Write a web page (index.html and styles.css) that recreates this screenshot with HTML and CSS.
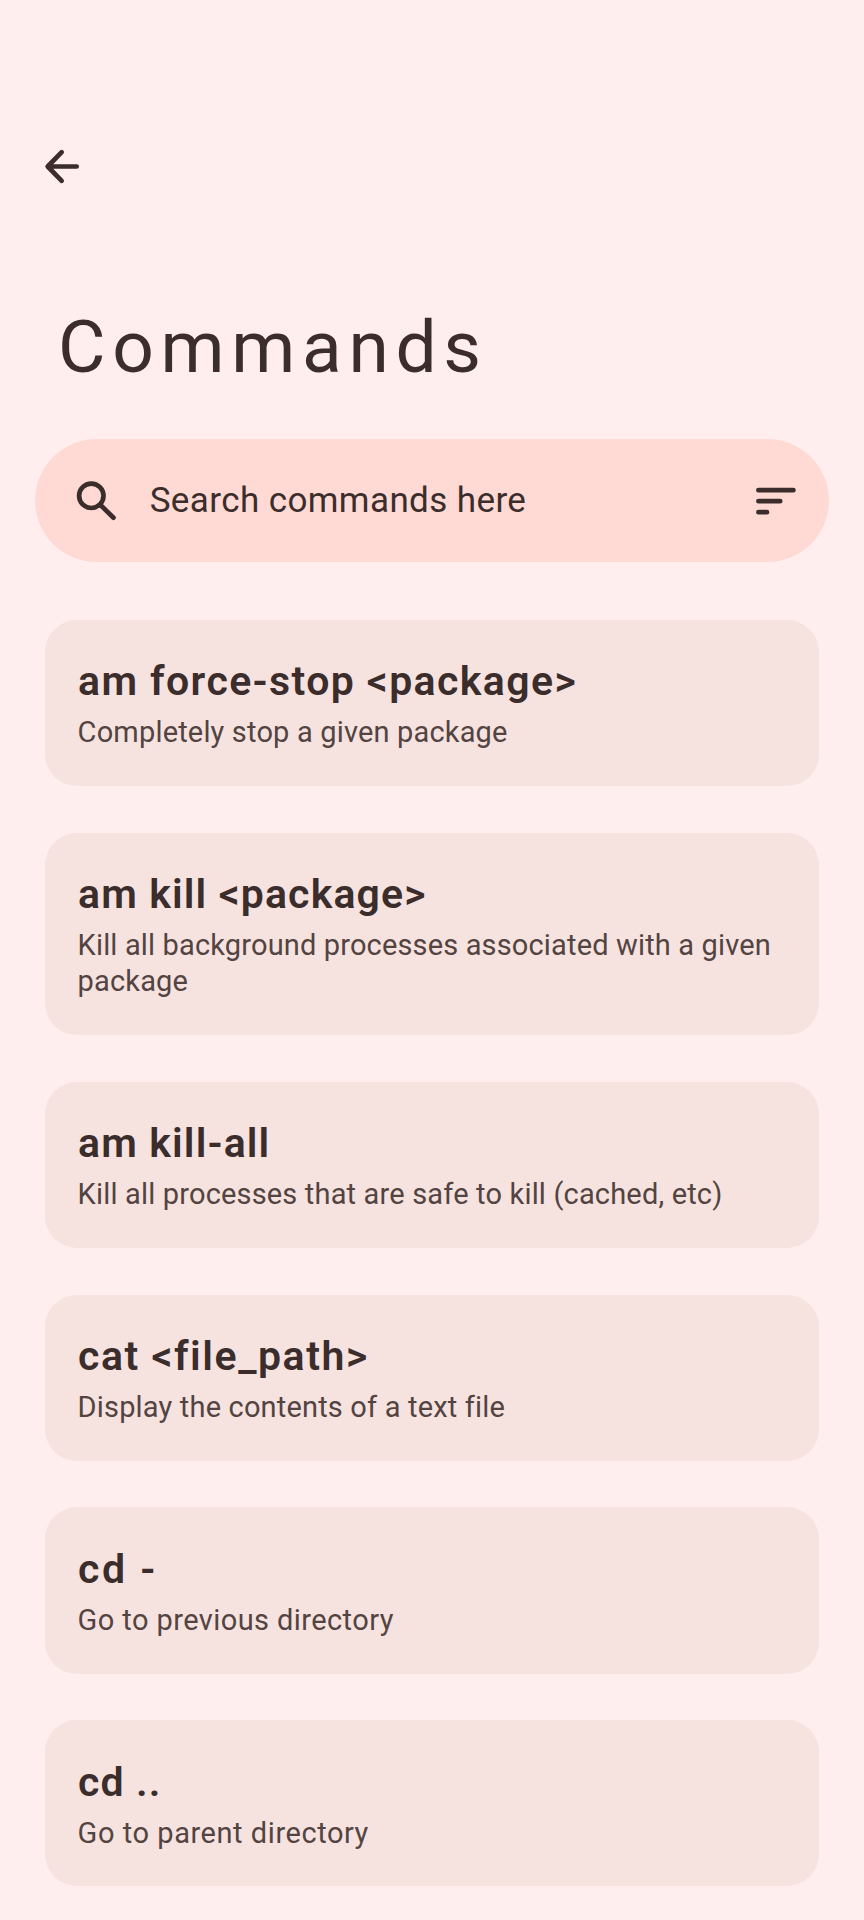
FILE: index.html
```
<!DOCTYPE html>
<html lang="en">
<head>
<meta charset="utf-8">
<title>Commands</title>
<link rel="stylesheet" href="styles.css">
</head>
<body>
<header class="topbar">
  <svg class="back" viewBox="0 0 40 40"><path d="M20.7 5.2 6.7 19.5 20.7 33.8M7.4 19.5H35.7"/></svg>
</header>
<h1 class="heading">Commands</h1>
<div class="search">
  <svg class="icon-search" viewBox="0 0 42 42"><circle cx="15.3" cy="15.8" r="12.2"/><path d="M24.2 24.7 37.5 37.7"/></svg>
  <span class="placeholder">Search commands here</span>
  <svg class="icon-sort" viewBox="0 0 40 28"><path d="M2.4 3.2H37.4M2.4 14.2H24.2M2.4 25.2H11"/></svg>
</div>
<main class="list">
  <article class="card force-stop"><h2>am force-stop &lt;package&gt;</h2><p>Completely stop a given package</p></article>
  <article class="card tall kill"><h2>am kill &lt;package&gt;</h2><p>Kill all background processes associated with a given package</p></article>
  <article class="card kill-all"><h2>am kill-all</h2><p>Kill all processes that are safe to kill (cached, etc)</p></article>
  <article class="card cat"><h2>cat &lt;file_path&gt;</h2><p>Display the contents of a text file</p></article>
  <article class="card cd-prev"><h2>cd -</h2><p>Go to previous directory</p></article>
  <article class="card cd-up"><h2>cd ..</h2><p>Go to parent directory</p></article>
</main>
</body>
</html>
```
FILE: styles.css
```
* { box-sizing: border-box; margin: 0; }
body {
  width: 864px;
  height: 1920px;
  overflow: hidden;
  background: #ffeeed;
  color: #3b2d2b;
  font-family: Roboto, sans-serif;
}
svg { display: block; fill: none; stroke: #3b2d2b; stroke-width: 4.7; stroke-linecap: round; stroke-linejoin: round; }
.topbar { height: 305px; padding: 146.7px 0 0 41px; }
.back { width: 40px; height: 40px; }
.heading { height: 84px; padding-left: 58px; font-size: 73px; line-height: 84px; font-weight: 400; letter-spacing: 6.7px; }
.search {
  display: flex;
  align-items: center;
  width: 794px;
  height: 123px;
  margin: 50px 0 0 35px;
  padding: 0 31px 0 41px;
  border-radius: 62px;
  background: #ffdad4;
}
.icon-search { width: 42px; height: 42px; }
.placeholder { flex: 1; padding: 1px 0 0 31.7px; font-size: 35px; line-height: 42px; letter-spacing: .4px; }
.icon-sort { width: 40px; height: 28px; margin-right: 2.5px; }
.list { display: flex; flex-direction: column; gap: 46.8px; padding: 57.8px 45px 0; }
.card { height: 166.1px; padding: 37.5px 33px 0; border-radius: 32px; background: #f6e3e0; }
.tall { height: 202.2px; }
h2 { font-size: 41px; line-height: 48px; font-weight: 600; letter-spacing: 1.4px; white-space: nowrap; }
p { margin: 9px 0 0 -.4px; color: #534341; font-size: 29px; line-height: 36px; letter-spacing: .17px; }
.kill h2 { letter-spacing: 1.14px; }
.kill p { letter-spacing: .15px; margin-right: -10px; }
.kill-all h2 { letter-spacing: 1.15px; }
.cat h2 { letter-spacing: 1.55px; }
.cd-prev h2 { letter-spacing: 2.5px; }
.cd-up h2 { letter-spacing: 1.1px; }
.cd-prev p { letter-spacing: .41px; }
.cd-up p { letter-spacing: .55px; }
```
